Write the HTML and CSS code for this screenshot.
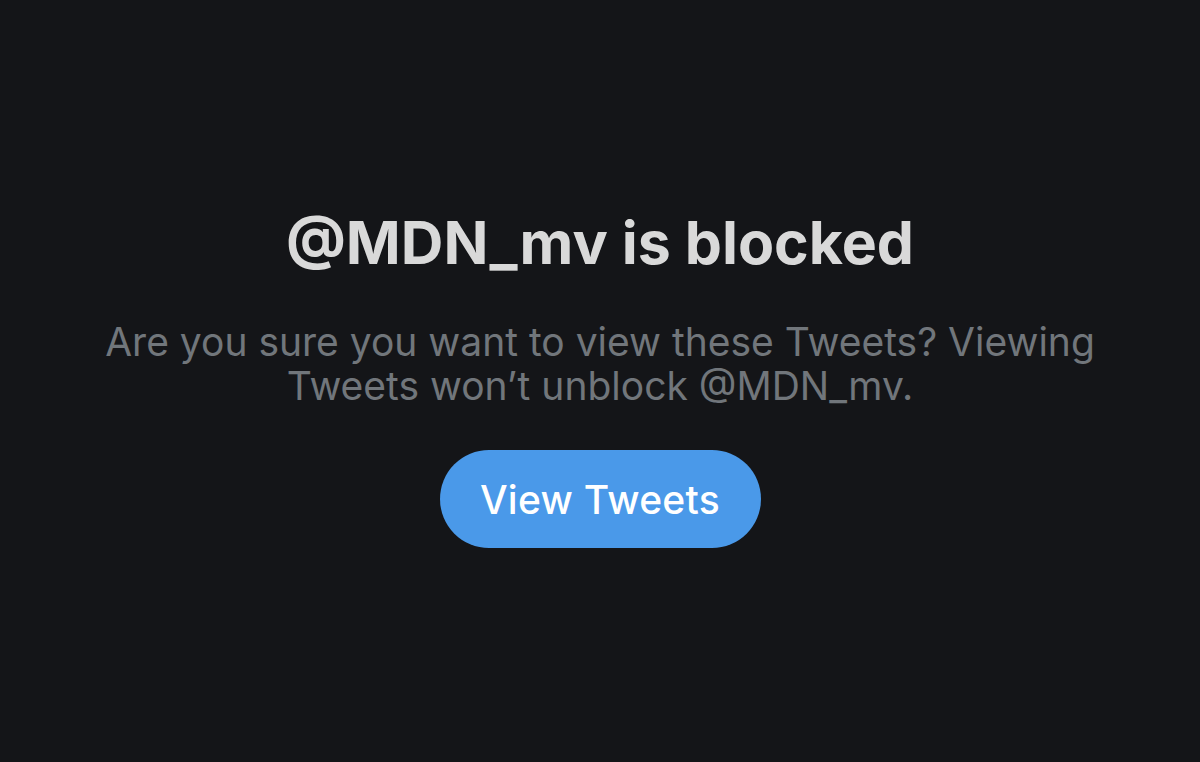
FILE: index.html
```html
<!DOCTYPE html>
<html lang="en">
<head>
    <meta charset="UTF-8">
    <meta name="viewport" content="width=device-width, initial-scale=1.0">
    <title>Blocked</title>
    <link rel="stylesheet" href="styles.css">
</head>
<body>
    <div class="blocked">
        <h1 class="title">@MDN_mv is blocked</h1>
        <p class="message">Are you sure you want to view these Tweets? Viewing Tweets won’t unblock @MDN_mv.</p>
        <button class="view-btn">View Tweets</button>
    </div>
</body>
</html>
```

FILE: styles.css
```css
html, body{
    margin:0;
    padding:0;
    height:100%;
}
body{
    background-color:#141518;
    font-family:Inter, "Noto Sans", sans-serif;
}
.blocked{
    display:flex;
    flex-direction:column;
    align-items:center;
    padding-top:205px;
}
.title{
    margin:0;
    color:#d9d9d9;
    font-size:59px;
    font-weight:700;
    line-height:76px;
}
.message{
    margin:39px 0 0;
    width:1100px;
    text-align:center;
    color:#71767b;
    font-size:39px;
    line-height:44px;
}
.view-btn{
    margin-top:42px;
    width:321px;
    height:98px;
    border:none;
    border-radius:49px;
    background-color:#4a99e9;
    color:#ffffff;
    font-family:Inter, "Noto Sans", sans-serif;
    font-size:39px;
    font-weight:500;
    letter-spacing:0.3px;
}
```
